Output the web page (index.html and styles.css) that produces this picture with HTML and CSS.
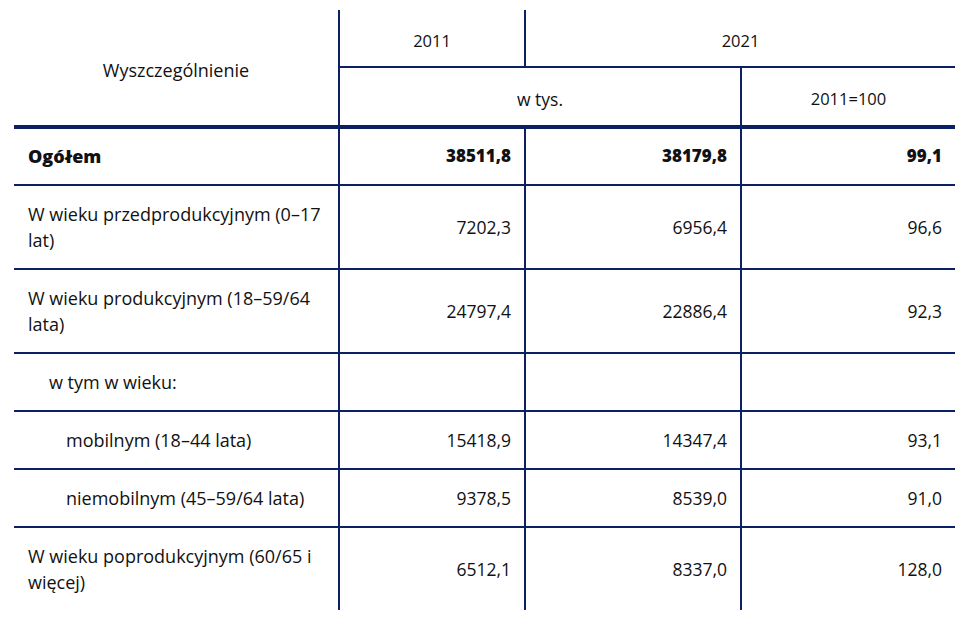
FILE: index.html
```html
<!DOCTYPE html>
<html lang="pl">
<head>
<meta charset="utf-8">
<title>Ludność według ekonomicznych grup wieku</title>
<link rel="stylesheet" href="styles.css">
</head>
<body>
<table class="data">
  <colgroup>
    <col class="c-label">
    <col class="c-2011">
    <col class="c-2021">
    <col class="c-idx">
  </colgroup>
  <thead>
    <tr class="h1">
      <th rowspan="2" class="label-head">Wyszczególnienie</th>
      <th class="num-head">2011</th>
      <th colspan="2" class="num-head no-right">2021</th>
    </tr>
    <tr class="h2">
      <th colspan="2" class="unit-head">w tys.</th>
      <th class="num-head no-right">2011=100</th>
    </tr>
  </thead>
  <tbody>
    <tr class="total">
      <td class="lbl">Ogółem</td>
      <td>38511,8</td>
      <td>38179,8</td>
      <td class="no-right">99,1</td>
    </tr>
    <tr>
      <td class="lbl">W wieku przedprodukcyjnym (0–17 lat)</td>
      <td>7202,3</td>
      <td>6956,4</td>
      <td class="no-right">96,6</td>
    </tr>
    <tr>
      <td class="lbl">W wieku produkcyjnym (18–59/64 lata)</td>
      <td>24797,4</td>
      <td>22886,4</td>
      <td class="no-right">92,3</td>
    </tr>
    <tr>
      <td class="lbl ind1">w tym w wieku:</td>
      <td></td>
      <td></td>
      <td class="no-right"></td>
    </tr>
    <tr>
      <td class="lbl ind2">mobilnym (18–44 lata)</td>
      <td>15418,9</td>
      <td>14347,4</td>
      <td class="no-right">93,1</td>
    </tr>
    <tr>
      <td class="lbl ind2">niemobilnym (45–59/64 lata)</td>
      <td>9378,5</td>
      <td>8539,0</td>
      <td class="no-right">91,0</td>
    </tr>
    <tr class="last">
      <td class="lbl">W wieku poprodukcyjnym (60/65 i więcej)</td>
      <td>6512,1</td>
      <td>8337,0</td>
      <td class="no-right">128,0</td>
    </tr>
  </tbody>
</table>
</body>
</html>
```

FILE: styles.css
```css
html, body {
  margin: 0;
  padding: 0;
  background: #ffffff;
}

body {
  padding: 10px 0 0 14px;
  font-family: "Open Sans", "Noto Sans", sans-serif;
  font-size: 18px;
  font-weight: 500;
  color: #111111;
}

.data {
  border-collapse: collapse;
  table-layout: fixed;
  width: 941px;
}

.c-label { width: 325px; }
.c-2011 { width: 186px; }
.c-2021 { width: 216px; }
.c-idx { width: 214px; }

.data th,
.data td {
  border-right: 2px solid #0b1f63;
  border-bottom: 2px solid #0b1f63;
  line-height: 26px;
}

.data .no-right {
  border-right: none;
}

.data th {
  font-weight: 500;
  text-align: center;
  padding: 0 10px;
}

.data th.num-head {
  font-size: 16.5px;
}

.data th.unit-head {
  font-size: 17.5px;
}

.h1 th {
  height: 50px;
  padding-top: 6px;
}

.h2 th {
  height: 52px;
  padding-top: 5px;
  border-bottom: 4px solid #0b1f63;
}

.h1 th.label-head {
  border-bottom: 4px solid #0b1f63;
  padding-top: 5px;
}

.data td {
  text-align: right;
  font-size: 17.5px;
  padding: 15px 13px 15px 13px;
}

.data td.lbl {
  text-align: left;
  font-size: 18px;
  padding-left: 14px;
  padding-right: 8px;
}

.data td.ind1 { padding-left: 35px; }
.data td.ind2 { padding-left: 52px; }

.total td {
  font-weight: 800;
  font-size: 17px;
  padding-top: 14px;
}

.total td.lbl {
  font-size: 18px;
}

.last td {
  border-bottom: none;
}
```
